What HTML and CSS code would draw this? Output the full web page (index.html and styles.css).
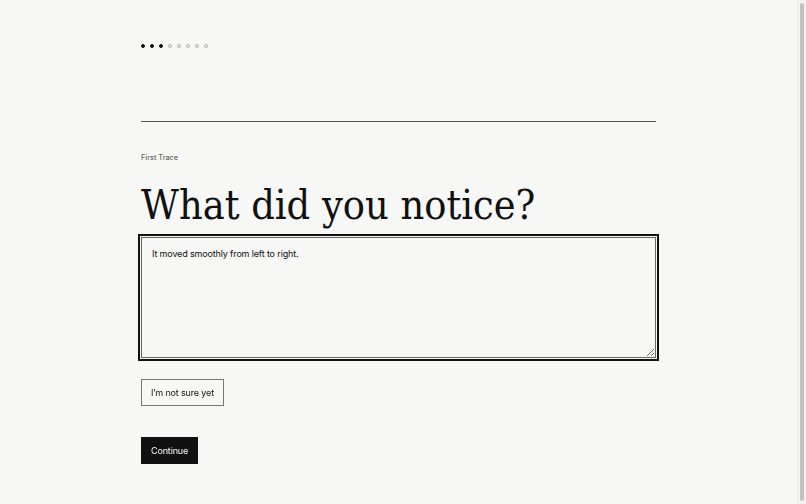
FILE: index.html
```
<!DOCTYPE html>
<html lang="en">
<head>
<meta charset="utf-8">
<title>First Trace</title>
<link rel="stylesheet" href="styles.css">
</head>
<body>
<main class="page">
  <div class="progress">
    <span class="dot done"></span><span class="dot done"></span><span class="dot done"></span><span class="dot"></span><span class="dot"></span><span class="dot"></span><span class="dot"></span><span class="dot"></span>
  </div>
  <hr class="rule">
  <p class="eyebrow">First Trace</p>
  <h1 class="title">What did you notice?</h1>
  <textarea class="answer" autofocus>It moved smoothly from left to right.</textarea>
  <button class="btn btn-ghost" type="button">I’m not sure yet</button>
  <button class="btn btn-solid" type="button">Continue</button>
</main>
<div class="scrollbar" aria-hidden="true"><div class="scrollbar-thumb"></div></div>
<script>
  var t = document.querySelector('.answer');
  t.focus();
  t.setSelectionRange(t.value.length, t.value.length);
</script>
</body>
</html>
```
FILE: styles.css
```
html { background: #f7f7f5; }

body {
  margin: 0;
  padding-right: 9px;
  background: #f7f7f5;
  color: #111;
  font-family: Inter, "Liberation Sans", sans-serif;
}

.page {
  width: 515px;
  margin: 0 auto;
  padding: 44px 0 40px;
  display: flex;
  flex-direction: column;
  align-items: flex-start;
}

.progress { display: flex; gap: 5px; height: 4px; }
.dot {
  width: 4px; height: 4px; border-radius: 50%;
  box-sizing: border-box;
  border: 1px solid #b0b0ae;
}
.dot.done { background: #111; border-color: #111; }

.rule {
  align-self: stretch;
  border: 0;
  border-top: 1px solid #555;
  margin: 73px 0 0;
}

.eyebrow {
  margin: 29px 0 0;
  font-size: 7.3px;
  line-height: 14px;
  color: #666;
  font-weight: 500;
}

.title {
  margin: 12px 0 0;
  font-family: "DejaVu Serif", Georgia, serif;
  font-stretch: semi-condensed;
  font-weight: 400;
  font-size: 41px;
  line-height: 56px;
  letter-spacing: 0;
  color: #111;
}

.answer {
  margin-top: 4px;
  align-self: stretch;
  box-sizing: border-box;
  height: 121px;
  padding: 10px 10px;
  border: 1px solid #666;
  background: #f7f7f5;
  color: #111;
  font-family: Inter, "Liberation Sans", sans-serif;
  font-size: 9px;
  letter-spacing: -0.15px;
  line-height: 12px;
  resize: vertical;
  outline: 2px solid #111;
  outline-offset: 1px;
  caret-color: #111;
}

.btn {
  height: 27px;
  padding: 0 9px;
  font-family: Inter, "Liberation Sans", sans-serif;
  font-size: 9px;
  letter-spacing: -0.15px;
  cursor: pointer;
  border-radius: 0;
}
.btn-ghost {
  margin-top: 21px;
  background: #f7f7f5;
  border: 1px solid #777;
  color: #111;
}
.btn-solid {
  margin-top: 31px;
  background: #111;
  border: 1px solid #111;
  color: #fff;
}

.scrollbar {
  position: fixed;
  top: 0;
  right: 0;
  bottom: 0;
  width: 9px;
  box-sizing: border-box;
  background: #f4f4f2;
  border-left: 1px solid #e6e6e4;
  padding: 3px 2px 3px 2px;
  display: flex;
}
.scrollbar-thumb {
  flex: 1;
  background: #c2c2c2;
  border-radius: 3px;
}
```
